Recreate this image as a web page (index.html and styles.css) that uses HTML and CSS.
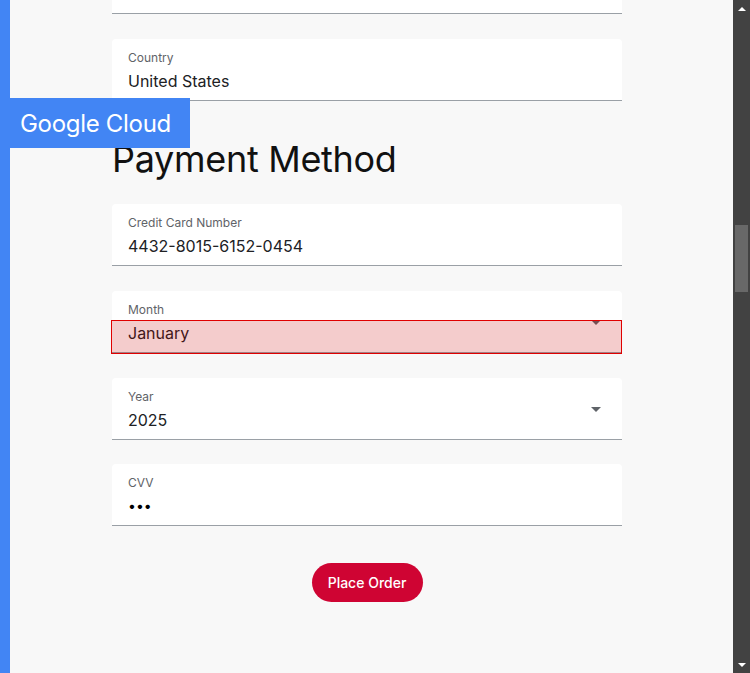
FILE: index.html
```html
<!DOCTYPE html>
<html lang="en">
<head>
<meta charset="utf-8">
<title>Checkout</title>
<link rel="stylesheet" href="styles.css">
</head>
<body>
<div class="page">
  <div class="accent"></div>
  <main class="main">
    <div class="badge">Google Cloud</div>
    <form class="form">
      <div class="field field-partial"></div>
      <div class="field">
        <span class="label">Country</span>
        <span class="value">United States</span>
      </div>
      <h2 class="heading">Payment Method</h2>
      <div class="field">
        <span class="label">Credit Card Number</span>
        <span class="value">4432-8015-6152-0454</span>
      </div>
      <div class="field field-select">
        <span class="label">Month</span>
        <span class="value">January</span>
        <span class="arrow"></span>
        <span class="highlight"></span>
      </div>
      <div class="field field-select">
        <span class="label">Year</span>
        <span class="value">2025</span>
        <span class="arrow"></span>
      </div>
      <div class="field">
        <span class="label">CVV</span>
        <span class="value value-dots">&bull;&bull;&bull;</span>
      </div>
      <div class="actions">
        <button type="button" class="order-btn">Place Order</button>
      </div>
    </form>
  </main>
  <div class="scrollbar">
    <span class="sb-arrow sb-up"></span>
    <div class="sb-track"><span class="sb-thumb"></span></div>
    <span class="sb-arrow sb-down"></span>
  </div>
</div>
</body>
</html>
```

FILE: styles.css
```css
* { box-sizing: border-box; }

html, body {
  margin: 0;
  padding: 0;
  height: 100%;
}

body {
  font-family: Inter, "Noto Sans", "Liberation Sans", sans-serif;
  background: #f8f8f8;
  color: #202124;
}

.page {
  display: flex;
  height: 673px;
  overflow: hidden;
}

.accent {
  width: 10px;
  flex: none;
  background: #4285f4;
}

.main {
  flex: 1;
  position: relative;
  overflow: hidden;
  background: #f8f8f8;
}

.badge {
  position: absolute;
  left: 0;
  top: 98px;
  width: 180px;
  height: 50px;
  padding-left: 10px;
  display: flex;
  align-items: center;
  background: #4285f4;
  color: #ffffff;
  font-size: 24px;
  letter-spacing: -0.3px;
  z-index: 2;
}

.form {
  width: 510px;
  margin: -48px 0 0 102px;
  display: flex;
  flex-direction: column;
}

.field {
  position: relative;
  display: flex;
  flex-direction: column;
  height: 62px;
  padding: 10px 16px 0;
  margin-bottom: 24.67px;
  background: #ffffff;
  border-radius: 4px 4px 0 0;
  border-bottom: 1px solid #9aa0a6;
}

.label {
  font-size: 12px;
  line-height: 16px;
  margin-top: 1px;
  color: #5f6368;
}

.value {
  margin-top: 5px;
  font-size: 16px;
  line-height: 20px;
  color: #202124;
}

.value-dots {
  font-size: 14px;
  color: #000;
}

.arrow {
  position: absolute;
  right: 21px;
  top: 29px;
  width: 0;
  height: 0;
  border-left: 5px solid transparent;
  border-right: 5px solid transparent;
  border-top: 5px solid #5f6368;
}

.highlight {
  position: absolute;
  left: -1px;
  right: 0;
  top: 29px;
  height: 34px;
  background: rgba(200, 0, 0, 0.2);
  border: 1px solid #e00000;
}

.heading {
  margin: 12px 0 23px;
  font-size: 36px;
  font-weight: 400;
  line-height: 44px;
  letter-spacing: -0.3px;
  color: #111111;
}

.actions {
  display: flex;
  justify-content: center;
  margin-top: 12px;
}

.order-btn {
  height: 39px;
  width: 111px;
  padding: 0;
  border: none;
  border-radius: 20px;
  background: #cf0433;
  color: #ffffff;
  font-family: inherit;
  font-size: 14px;
  font-weight: 500;
}

.scrollbar {
  width: 17px;
  flex: none;
  display: flex;
  flex-direction: column;
  align-items: center;
  background: #424242;
}

.sb-arrow {
  flex: none;
  width: 0;
  height: 0;
  border-left: 4px solid transparent;
  border-right: 4px solid transparent;
}

.sb-up {
  margin-top: 7px;
  border-bottom: 4px solid #ffffff;
}

.sb-down {
  margin-bottom: 6px;
  border-top: 4px solid #ffffff;
}

.sb-track {
  flex: 1;
  width: 100%;
  padding: 0 2px;
}

.sb-thumb {
  display: block;
  width: 13px;
  height: 67px;
  margin-top: 214px;
  background: #686868;
}
```
